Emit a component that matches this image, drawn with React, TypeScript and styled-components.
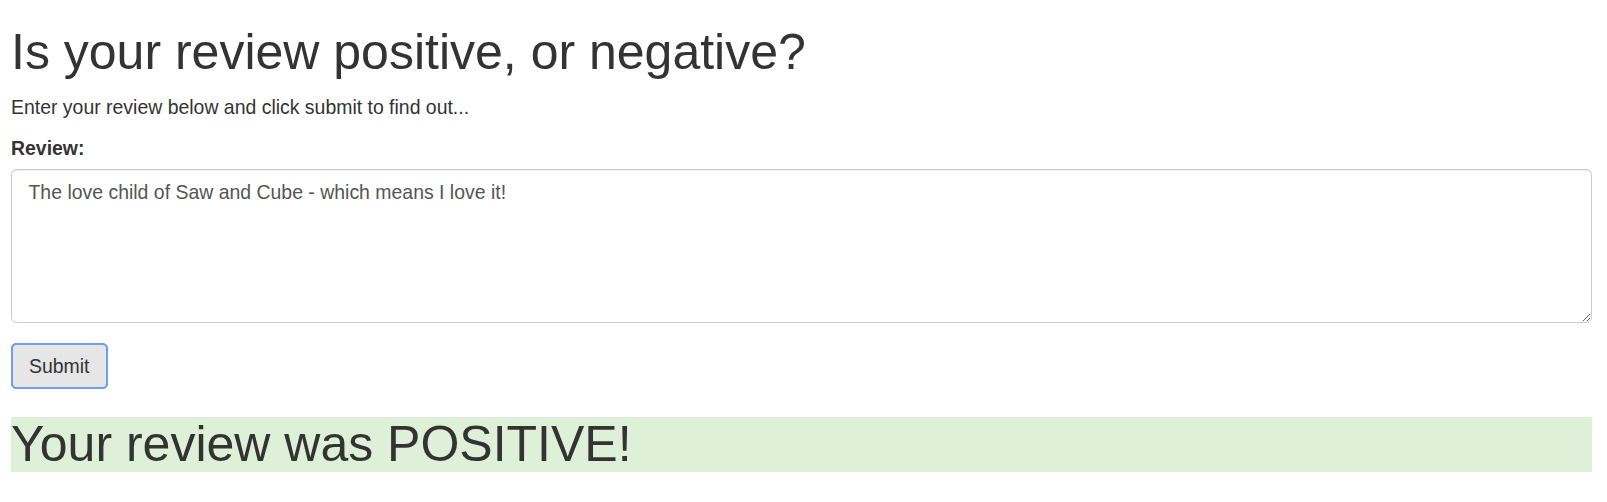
import React from "react";
import styled, { createGlobalStyle } from "styled-components";

const GlobalStyle = createGlobalStyle`
  * { box-sizing: border-box; }
  html, body { margin: 0; padding: 0; background: #fff; }
  body {
    font-family: "Liberation Sans", Arial, Helvetica, sans-serif;
    font-size: 19.45px;
    line-height: 27.5px;
    color: #333;
  }
`;

const Page = styled.main`
  display: flex;
  flex-direction: column;
  padding: 25.4px 15px 30px 11px;
`;

const Title = styled.h1`
  margin: 0 0 13.75px;
  font-size: 50px;
  line-height: 54.6px;
  font-weight: 400;
  color: #333;
`;

const Intro = styled.p`
  margin: 0 0 13.75px;
`;

const FormGroup = styled.div`
  display: flex;
  flex-direction: column;
  margin-bottom: 20.6px;
`;

const Label = styled.label`
  font-weight: 700;
  margin-bottom: 6.9px;
`;

const TextArea = styled.textarea`
  display: block;
  width: 100%;
  height: 153.5px;
  margin: 0;
  padding: 8.25px 16.5px;
  border: 1px solid #ccc;
  border-radius: 5.5px;
  box-shadow: inset 0 1px 1px rgba(0, 0, 0, 0.075);
  font-family: "Liberation Sans", Arial, Helvetica, sans-serif;
  font-size: 19.45px;
  line-height: 27.5px;
  color: #555;
  background: #fff;
  resize: vertical;
  outline: none;
`;

const Button = styled.button`
  align-self: flex-start;
  padding: 8.25px 17px;
  border: 1px solid #8c8c8c;
  border-radius: 5.5px;
  outline: 2px solid #6f9ff0;
  outline-offset: -2px;
  background: #e6e6e6;
  color: #333;
  font-family: "Liberation Sans", Arial, Helvetica, sans-serif;
  font-size: 19.45px;
  line-height: 27.5px;
  cursor: pointer;
`;

const Result = styled.h1<{ $positive?: boolean }>`
  margin: 27.5px 0 0;
  font-size: 50px;
  line-height: 54.6px;
  font-weight: 400;
  color: #333;
  background: ${(p) => (p.$positive ? "#dff0d8" : "#f2dede")};
`;

export default function App() {
  return (
    <>
      <GlobalStyle />
      <Page>
        <Title>Is your review positive, or negative?</Title>
        <Intro>Enter your review below and click submit to find out...</Intro>
        <FormGroup>
          <Label htmlFor="review">Review:</Label>
          <TextArea
            id="review"
            defaultValue="The love child of Saw and Cube - which means I love it!"
          />
        </FormGroup>
        <Button type="button">Submit</Button>
        <Result $positive>Your review was POSITIVE!</Result>
      </Page>
    </>
  );
}
